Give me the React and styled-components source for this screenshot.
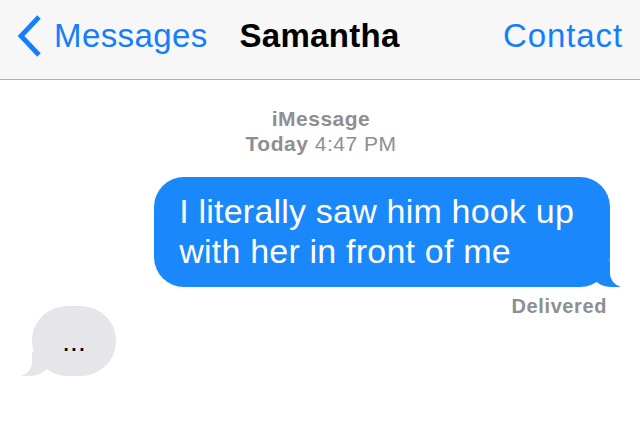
import styled, { createGlobalStyle } from 'styled-components';

const GlobalStyle = createGlobalStyle`
  body {
    margin: 0;
    background: #fff;
    font-family: "Liberation Sans", Arial, sans-serif;
  }
`;

const Screen = styled.div`
  width: 640px;
  height: 426px;
  display: flex;
  flex-direction: column;
  background: #fff;
  overflow: hidden;
`;

const NavBar = styled.header`
  height: 80px;
  box-sizing: border-box;
  display: grid;
  grid-template-columns: 1fr auto 1fr;
  align-items: center;
  padding: 0 17px 7px 16px;
  background: #f7f7f7;
  border-bottom: 1px solid #b2b2b2;
`;

const NavLink = styled.div`
  display: flex;
  align-items: center;
  gap: 12px;
  justify-self: ${(p) => (p.$end ? 'end' : 'start')};
  color: #157efb;
  font-size: 33px;
  letter-spacing: ${(p) => (p.$end ? '0.9px' : '0.4px')};
`;

const Title = styled.div`
  font-size: 33px;
  font-weight: bold;
  color: #000;
  letter-spacing: 0.3px;
`;

const Thread = styled.main`
  display: flex;
  flex-direction: column;
  padding: 26px 30px 0 32px;
`;

const Meta = styled.div`
  align-self: center;
  text-align: center;
  color: #8e8e93;
  font-size: 21px;
  line-height: 25px;
  letter-spacing: 0.5px;

  b {
    font-weight: bold;
  }
`;

const SentBubble = styled.div`
  position: relative;
  align-self: flex-end;
  margin-top: 21px;
  padding: 14px 36px 16px 25px;
  background: #1a88fb;
  color: #fff;
  font-size: 34px;
  line-height: 40px;
  letter-spacing: 0.2px;
  border-radius: 30px;

  &::before {
    content: '';
    position: absolute;
    right: -10px;
    bottom: 0;
    width: 28px;
    height: 26px;
    background: #1a88fb;
    border-bottom-left-radius: 20px 14px;
  }

  &::after {
    content: '';
    position: absolute;
    right: -40px;
    bottom: 0;
    width: 40px;
    height: 28px;
    background: #fff;
    border-bottom-left-radius: 14px;
  }
`;

const Status = styled.div`
  align-self: flex-end;
  margin-top: 7px;
  margin-right: 3px;
  color: #8e8e93;
  font-size: 20px;
  line-height: 24px;
  font-weight: bold;
  letter-spacing: 0.6px;
`;

const TypingBubble = styled.div`
  position: relative;
  align-self: flex-start;
  margin-top: -12px;
  width: 84px;
  height: 70px;
  box-sizing: border-box;
  padding-top: 2px;
  display: flex;
  align-items: center;
  justify-content: center;
  background: #e5e5ea;
  color: #000;
  font-size: 28px;
  border-radius: 36px / 34px;

  &::before {
    content: '';
    position: absolute;
    left: -11px;
    bottom: 0;
    width: 28px;
    height: 24px;
    background: #e5e5ea;
    border-bottom-right-radius: 20px 14px;
  }

  &::after {
    content: '';
    position: absolute;
    left: -40px;
    bottom: 0;
    width: 40px;
    height: 26px;
    background: #fff;
    border-bottom-right-radius: 14px;
  }
`;

const Dots = styled.span`
  position: relative;
  z-index: 1;
  line-height: 1;
`;

const BackChevron = () => (
  <svg width="26" height="42" viewBox="0 0 26 42">
    <path d="M23 2 L5 21 L23 40" fill="none" stroke="#157efb" strokeWidth="4.8" />
  </svg>
);

export default function App() {
  return (
    <>
      <GlobalStyle />
      <Screen>
        <NavBar>
          <NavLink>
            <BackChevron />
            Messages
          </NavLink>
          <Title>Samantha</Title>
          <NavLink $end>Contact</NavLink>
        </NavBar>
        <Thread>
          <Meta>
            <b>iMessage</b>
            <br />
            <b>Today</b> 4:47 PM
          </Meta>
          <SentBubble>
            I literally saw him hook up
            <br />
            with her in front of me
          </SentBubble>
          <Status>Delivered</Status>
          <TypingBubble>
            <Dots>...</Dots>
          </TypingBubble>
        </Thread>
      </Screen>
    </>
  );
}
